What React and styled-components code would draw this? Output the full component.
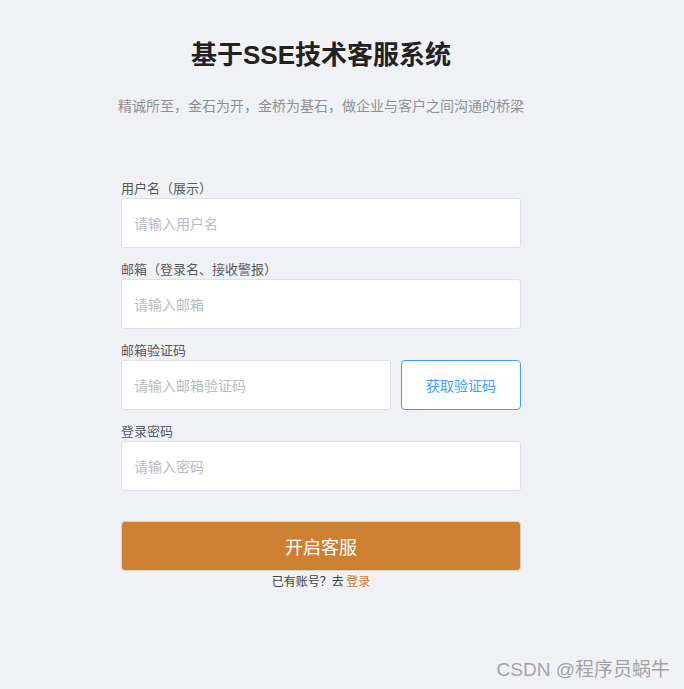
import React from "react";
import styled, { createGlobalStyle } from "styled-components";

const Global = createGlobalStyle`
  html, body { margin: 0; padding: 0; background: #f0f1f5; }
  body { font-family: "Liberation Sans", "Noto Sans CJK SC", sans-serif; }
  * { box-sizing: border-box; }
`;

const Page = styled.div`
  position: relative;
  width: 684px;
  height: 689px;
  background: #f0f1f5;
  display: flex;
  flex-direction: column;
  align-items: center;
  padding-right: 42px;
`;

const Title = styled.h1`
  margin: 36px 0 0;
  font-size: 26px;
  line-height: 38px;
  font-weight: 700;
  color: #222;
`;

const Subtitle = styled.p`
  margin: 21px 0 0;
  font-size: 14px;
  line-height: 20px;
  color: #8e9096;
  font-family: "Noto Sans CJK SC", sans-serif;
`;

const Form = styled.form`
  width: 400px;
  margin-top: 63px;
  display: flex;
  flex-direction: column;
  gap: 11px;
`;

const Field = styled.div`
  display: flex;
  flex-direction: column;
`;

const Label = styled.label`
  font-family: "Noto Sans CJK SC", sans-serif;
  font-size: 13px;
  line-height: 20px;
  color: #555960;
`;

const Row = styled.div`
  display: flex;
  gap: 10px;
`;

const Input = styled.input`
  flex: ${(p) => (p.$grow ? "1" : "none")};
  width: 100%;
  min-width: 0;
  height: 50px;
  border: 1px solid #dcdfe6;
  border-radius: 3px;
  background: #fff;
  padding: 0 12px;
  font-family: "Noto Sans CJK SC", sans-serif;
  font-size: 14px;
  color: #333;
  outline: none;
  &::placeholder { color: #b8bbc2; }
`;

const CodeButton = styled.button`
  width: 120px;
  flex: none;
  height: 50px;
  border: 1px solid #409eff;
  border-radius: 4px;
  background: #fff;
  color: #409eff;
  font-family: "Noto Sans CJK SC", sans-serif;
  font-size: 14px;
  cursor: pointer;
`;

const Submit = styled.button`
  margin-top: 19px;
  height: 50px;
  border: 1px solid #d9d2c8;
  border-radius: 4px;
  background: #cd7f32;
  color: #fff;
  font-family: "Noto Sans CJK SC", sans-serif;
  font-size: 18px;
  cursor: pointer;
`;

const Footer = styled.div`
  margin-top: -10px;
  text-align: center;
  font-family: "Noto Sans CJK SC", sans-serif;
  font-size: 12px;
  line-height: 18px;
  color: #444;
`;

const LoginLink = styled.a`
  color: #cd7f32;
  text-decoration: none;
`;

const Watermark = styled.div`
  position: absolute;
  right: 14px;
  bottom: 8px;
  font-family: "Liberation Sans", "Noto Sans CJK SC", sans-serif;
  font-size: 19px;
  color: #a2a2a6;
  text-shadow: 0 0 1px rgba(255,255,255,0.8);
`;

export default function App() {
  return (
    <>
      <Global />
      <Page>
        <Title>基于SSE技术客服系统</Title>
        <Subtitle>精诚所至，金石为开，金桥为基石，做企业与客户之间沟通的桥梁</Subtitle>
        <Form onSubmit={(e) => e.preventDefault()}>
          <Field>
            <Label>用户名（展示）</Label>
            <Input placeholder="请输入用户名" />
          </Field>
          <Field>
            <Label>邮箱（登录名、接收警报）</Label>
            <Input placeholder="请输入邮箱" />
          </Field>
          <Field>
            <Label>邮箱验证码</Label>
            <Row>
              <Input $grow placeholder="请输入邮箱验证码" />
              <CodeButton type="button">获取验证码</CodeButton>
            </Row>
          </Field>
          <Field>
            <Label>登录密码</Label>
            <Input type="password" placeholder="请输入密码" />
          </Field>
          <Submit type="submit">开启客服</Submit>
          <Footer>
            已有账号？去 <LoginLink href="#">登录</LoginLink>
          </Footer>
        </Form>
        <Watermark>CSDN @程序员蜗牛</Watermark>
      </Page>
    </>
  );
}
